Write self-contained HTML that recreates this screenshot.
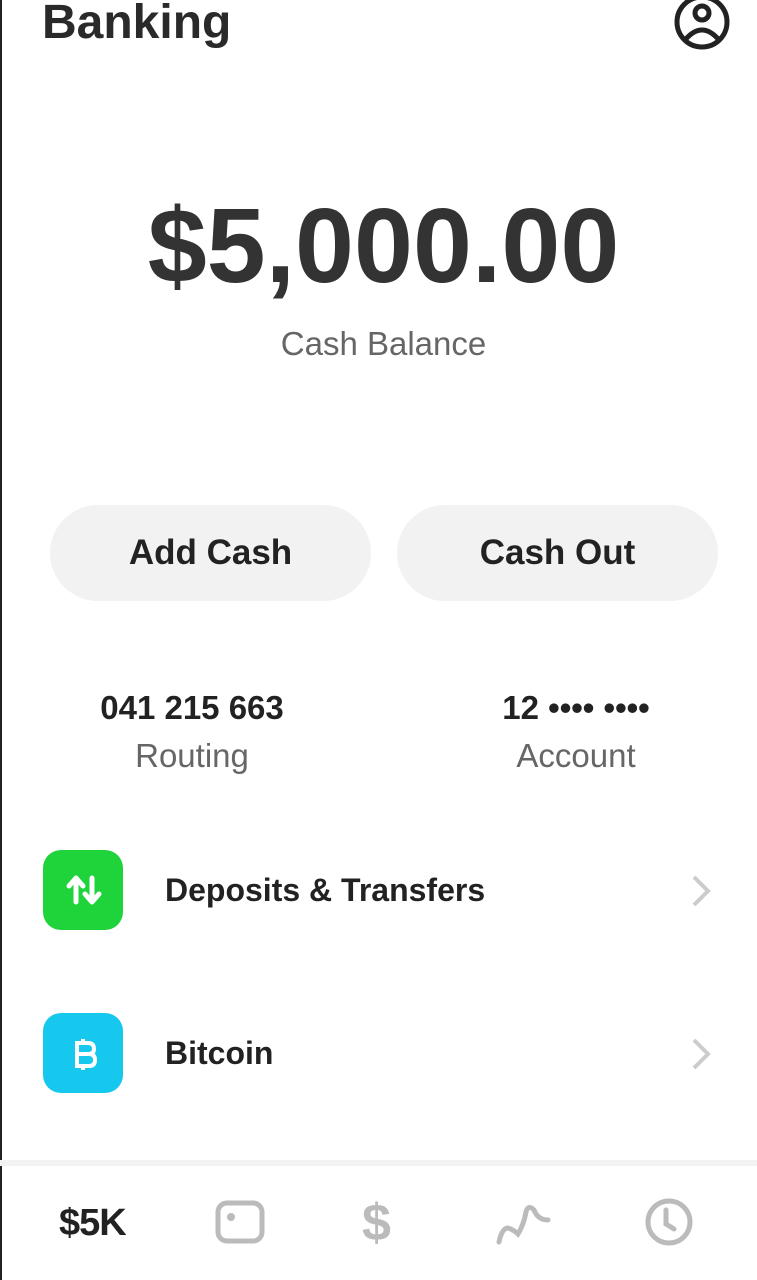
<!DOCTYPE html>
<html><head><style>
body{margin:0;width:757px;height:1280px;background:#fff;font-family:"Liberation Sans",sans-serif;position:relative;overflow:hidden;color:#222}
.a{position:absolute}
.btn{position:absolute;top:505px;height:96px;width:321px;border-radius:48px;background:#f2f2f2;font-size:35px;font-weight:bold;color:#222;display:flex;align-items:center;justify-content:center}
.c{position:absolute;text-align:center;width:300px}
</style></head><body>
<div class="a" style="left:0;top:0;width:2px;height:1280px;background:#222"></div>
<div class="a" style="left:42px;top:-5px;font-size:48px;font-weight:bold;color:#2a2a2a">Banking</div>
<svg class="a" style="left:672px;top:0" width="60" height="50" viewBox="0 0 60 50"><circle cx="30" cy="22" r="25" fill="none" stroke="#222" stroke-width="5"/><circle cx="30" cy="13" r="7" fill="none" stroke="#222" stroke-width="5"/><path d="M13 40 Q30 20 47 40" fill="none" stroke="#222" stroke-width="5"/></svg>
<div class="a" style="left:0;width:767px;top:186px;text-align:center;font-size:106px;font-weight:bold;color:#333">$5,000.00</div>
<div class="a" style="left:0;width:767px;top:325px;text-align:center;font-size:33px;color:#666">Cash Balance</div>
<div class="btn" style="left:50px">Add Cash</div>
<div class="btn" style="left:397px">Cash Out</div>
<div class="c" style="left:42px;top:689px;font-size:33px;font-weight:bold">041 215 663</div>
<div class="c" style="left:42px;top:737px;font-size:33px;color:#666">Routing</div>
<div class="c" style="left:426px;top:689px;font-size:33px;font-weight:bold">12 •••• ••••</div>
<div class="c" style="left:426px;top:737px;font-size:33px;color:#666">Account</div>
<div class="a" style="left:43px;top:850px;width:80px;height:80px;border-radius:18px;background:#1ed43a"></div>
<svg class="a" style="left:43px;top:850px" width="80" height="80"><path d="M33 52V29M26 36L33 28L40 36M49 28V51M42 44L49 52L56 44" fill="none" stroke="#fff" stroke-width="5" stroke-linecap="round" stroke-linejoin="round"/></svg>
<div class="a" style="left:165px;top:872px;font-size:32px;font-weight:bold">Deposits &amp; Transfers</div>
<svg class="a" style="left:690px;top:874px" width="24" height="34"><path d="M4 3L18 17L4 31" fill="none" stroke="#ccc" stroke-width="4"/></svg>
<div class="a" style="left:43px;top:1013px;width:80px;height:80px;border-radius:18px;background:#17c8ee"></div>
<svg class="a" style="left:43px;top:1013px" width="80" height="80"><path d="M34 30H45Q51 30 51 36Q51 41 45 41H34ZM34 41H46Q52 41 52 47Q52 53 46 53H34Z M34 28V55 M40 26V30 M40 53V57" fill="none" stroke="#fff" stroke-width="4" stroke-linejoin="round"/></svg>
<div class="a" style="left:165px;top:1035px;font-size:32px;font-weight:bold">Bitcoin</div>
<svg class="a" style="left:690px;top:1037px" width="24" height="34"><path d="M4 3L18 17L4 31" fill="none" stroke="#ccc" stroke-width="4"/></svg>
<div class="a" style="left:0;top:1160px;width:757px;height:6px;background:#f3f3f3"></div>
<div class="a" style="left:59px;top:1202px;font-size:38px;font-weight:bold;color:#222;letter-spacing:-1px">$5K</div>
<svg class="a" style="left:214px;top:1198px" width="52" height="48"><rect x="4" y="5" width="44" height="38" rx="9" fill="none" stroke="#bbb" stroke-width="5"/><circle cx="17" cy="19" r="4" fill="#bbb"/></svg>
<div class="a" style="left:362px;top:1193px;font-size:52px;font-weight:bold;color:#bbb">$</div>
<svg class="a" style="left:494px;top:1198px" width="62" height="48"><path d="M5 44Q8 30 14 30Q20 32 24 36Q30 26 32 14Q34 6 40 12Q44 22 54 22" fill="none" stroke="#bbb" stroke-width="5" stroke-linecap="round"/></svg>
<svg class="a" style="left:643px;top:1196px" width="52" height="52"><circle cx="26" cy="26" r="21" fill="none" stroke="#bbb" stroke-width="5"/><path d="M23 14V28L31 33" fill="none" stroke="#bbb" stroke-width="5" stroke-linecap="round"/></svg>
</body></html>
